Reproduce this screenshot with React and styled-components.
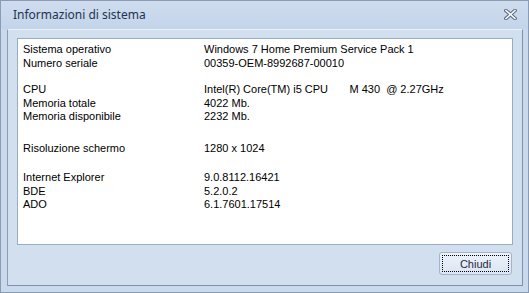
import React from "react";
import styled, { createGlobalStyle } from "styled-components";

const Global = createGlobalStyle`
  html, body { margin: 0; padding: 0; background: #ffffff; }
  body { font-family: "Liberation Sans", Arial, sans-serif; }
`;

const Window = styled.div`
  box-sizing: border-box;
  width: 529px;
  height: 293px;
  border: 1px solid #8b9bb4;
  background: #cbd9ec;
  display: flex;
  flex-direction: column;
`;

const TitleBar = styled.div`
  height: 28px;
  display: flex;
  align-items: center;
  justify-content: space-between;
  padding: 0 11px 0 12px;
  background: linear-gradient(#cfdcee, #c3d4ea);
`;

const Title = styled.span`
  font-family: "Noto Sans", "Liberation Sans", sans-serif;
  font-size: 12px;
  color: #1f3350;
  margin-top: -2px;
`;

const CloseBtn = styled.span`
  display: flex;
  width: 13px;
  height: 11px;
  margin-top: -1px;
`;

const Frame = styled.div`
  flex: 1;
  margin: 0 5px 6px 6px;
  border: 1px solid #7e92b0;
  border-top-color: #e9f0f9;
  border-left-color: #8a9dba;
  background: #d2dfef;
  display: flex;
  flex-direction: column;
  padding: 8px 9px 9px 9px;
`;

const InfoPanel = styled.div`
  box-sizing: border-box;
  height: 207px;
  background: #ffffff;
  border: 1px solid #9aabc4;
  padding: 4px 5px;
  font-size: 11px;
  line-height: 13.5px;
  color: #000;
`;

const Group = styled.div`
  display: grid;
  grid-template-columns: 181px 1fr;
  margin-top: ${(p) => p.$gap || 0}px;
`;

const Label = styled.span`
  white-space: pre;
`;

const Value = styled.span`
  white-space: pre;
`;

const Footer = styled.div`
  display: flex;
  justify-content: flex-end;
  padding-top: 7px;
  padding-right: 1px;
`;

const Button = styled.button`
  box-sizing: border-box;
  width: 73px;
  height: 23px;
  padding: 2px;
  border: 1px solid #a3b3ca;
  border-radius: 3px;
  background: linear-gradient(#eef3fa, #dbe5f3);
  font-family: "Liberation Sans", Arial, sans-serif;
  font-size: 11px;
  color: #1b2a40;
  display: flex;
  cursor: default;
`;

const FocusRing = styled.span`
  flex: 1;
  border: 1px dotted #000;
  display: flex;
  align-items: center;
  justify-content: center;
`;

const groups = [
  {
    gap: 0,
    rows: [
      ["Sistema operativo", "Windows 7 Home Premium Service Pack 1"],
      ["Numero seriale", "00359-OEM-8992687-00010"],
    ],
  },
  {
    gap: 13,
    rows: [
      ["CPU", "Intel(R) Core(TM) i5 CPU       M 430  @ 2.27GHz"],
      ["Memoria totale", "4022 Mb."],
      ["Memoria disponibile", "2232 Mb."],
    ],
  },
  { gap: 18.5, rows: [["Risoluzione schermo", "1280 x 1024"]] },
  {
    gap: 15.5,
    rows: [
      ["Internet Explorer", "9.0.8112.16421"],
      ["BDE", "5.2.0.2"],
      ["ADO", "6.1.7601.17514"],
    ],
  },
];

export default function App() {
  return (
    <>
      <Global />
      <Window>
        <TitleBar>
          <Title>Informazioni di sistema</Title>
          <CloseBtn>
            <svg width="13" height="11" viewBox="0 0 13 11">
              <path d="M2 1.5 L11 9.5 M11 1.5 L2 9.5" stroke="#5f6d82" strokeWidth="3.6" strokeLinecap="square" />
              <path d="M2 1.5 L11 9.5 M11 1.5 L2 9.5" stroke="#ffffff" strokeWidth="1.5" strokeLinecap="square" />
            </svg>
          </CloseBtn>
        </TitleBar>
        <Frame>
          <InfoPanel>
            {groups.map((g, i) => (
              <Group key={i} $gap={g.gap}>
                {g.rows.map(([l, v]) => (
                  <React.Fragment key={l}>
                    <Label>{l}</Label>
                    <Value>{v}</Value>
                  </React.Fragment>
                ))}
              </Group>
            ))}
          </InfoPanel>
          <Footer>
            <Button>
              <FocusRing>Chiudi</FocusRing>
            </Button>
          </Footer>
        </Frame>
      </Window>
    </>
  );
}
